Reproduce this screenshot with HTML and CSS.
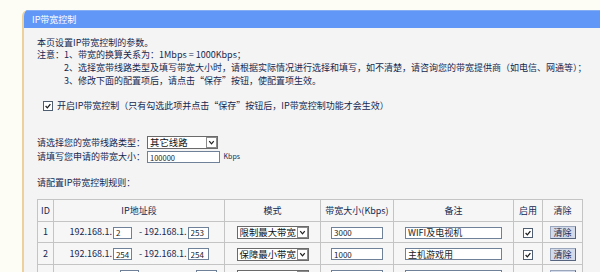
FILE: index.html
```html
<!DOCTYPE html>
<html lang="zh-CN">
<head>
  <meta charset="UTF-8">
  <title>IP带宽控制</title>
  <link rel="stylesheet" href="styles.css">
</head>
<body>
  <div class="panel">
    <div class="panel-title">IP带宽控制</div>
    <div class="panel-body">
      <div class="intro">
        <p>本页设置IP带宽控制的参数。</p>
        <div class="notes">
          <span class="notes-label">注意：</span>
          <div class="notes-list">
            <p>1、带宽的换算关系为：1Mbps = 1000Kbps；</p>
            <p>2、选择宽带线路类型及填写带宽大小时，请根据实际情况进行选择和填写，如不清楚，请咨询您的带宽提供商（如电信、网通等）；</p>
            <p>3、修改下面的配置项后，请点击“保存”按钮，使配置项生效。</p>
          </div>
        </div>
      </div>

      <label class="enable-row">
        <span class="check"><svg viewBox="0 0 10 10"><polyline points="2,5 4.2,7.3 8,2.6"/></svg></span>
        开启IP带宽控制（只有勾选此项并点击“保存”按钮后，IP带宽控制功能才会生效）
      </label>

      <div class="settings">
        <span>请选择您的宽带线路类型：</span>
        <span class="dropdown line-type">
          <span class="dropdown-text">其它线路</span>
          <span class="dropdown-btn"><svg viewBox="0 0 10 10"><polyline points="2.5,3.5 5,6.5 7.5,3.5"/></svg></span>
        </span>
        <span>请填写您申请的带宽大小：</span>
        <span class="bw-total"><input class="field total-field" type="text" value="100000"> Kbps</span>
      </div>

      <p class="rules-title">请配置IP带宽控制规则：</p>

      <table class="rules">
        <thead>
          <tr>
            <th class="col-id">ID</th>
            <th class="col-ip">IP地址段</th>
            <th class="col-mode">模式</th>
            <th class="col-bw">带宽大小(Kbps)</th>
            <th class="col-note">备注</th>
            <th class="col-on">启用</th>
            <th class="col-del">清除</th>
          </tr>
        </thead>
        <tbody>
          <tr>
            <td>1</td>
            <td>192.168.1.<input class="field ip-field" type="text" value="2"> - 192.168.1.<input class="field ip-field wide" type="text" value="253"></td>
            <td><span class="dropdown mode"><span class="dropdown-text">限制最大带宽</span><span class="dropdown-btn"><svg viewBox="0 0 10 10"><polyline points="2.5,3.5 5,6.5 7.5,3.5"/></svg></span></span></td>
            <td><input class="field bw-field" type="text" value="3000"></td>
            <td><input class="field note-field" type="text" value="WIFI及电视机"></td>
            <td><span class="check"><svg viewBox="0 0 10 10"><polyline points="2,5 4.2,7.3 8,2.6"/></svg></span></td>
            <td><button class="clear-btn">清除</button></td>
          </tr>
          <tr>
            <td>2</td>
            <td>192.168.1.<input class="field ip-field" type="text" value="254"> - 192.168.1.<input class="field ip-field wide" type="text" value="254"></td>
            <td><span class="dropdown mode"><span class="dropdown-text">保障最小带宽</span><span class="dropdown-btn"><svg viewBox="0 0 10 10"><polyline points="2.5,3.5 5,6.5 7.5,3.5"/></svg></span></span></td>
            <td><input class="field bw-field" type="text" value="1000"></td>
            <td><input class="field note-field" type="text" value="主机游戏用"></td>
            <td><span class="check"><svg viewBox="0 0 10 10"><polyline points="2,5 4.2,7.3 8,2.6"/></svg></span></td>
            <td><button class="clear-btn">清除</button></td>
          </tr>
          <tr class="row-cut">
            <td></td>
            <td class="ip-blank"><input class="field ip-field" type="text" value=""><input class="field ip-field wide" type="text" value=""></td>
            <td><span class="dropdown mode"><span class="dropdown-text"></span><span class="dropdown-btn"></span></span></td>
            <td><input class="field bw-field" type="text" value=""></td>
            <td><input class="field note-field" type="text" value=""></td>
            <td></td>
            <td><button class="clear-btn" aria-label="清除"></button></td>
          </tr>
        </tbody>
      </table>
    </div>
  </div>
</body>
</html>
```

FILE: styles.css
```css
:root {
  --text: #142850;
  --title-blue: #6198f8;
  --panel-bg: #f4f4f4;
  --panel-edge: #ecd19c;
  --grid: #c4c4c4;
  --field-border: #6f8198;
}

* {
  box-sizing: border-box;
}

body {
  margin: 0;
  background: #fdfdf6;
  color: var(--text);
  font-family: "Noto Sans CJK SC", sans-serif;
  font-size: 9px;
  overflow: hidden;
}

p {
  margin: 0;
}

.panel {
  margin: 10px 0 0 22px;
  border-left: 2px solid var(--panel-edge);
  border-top-left-radius: 6px;
  background: var(--panel-bg);
  min-height: 320px;
  overflow: hidden;
}

.panel-title {
  height: 18px;
  line-height: 17px;
  padding-left: 8px;
  border-top: 1px solid #86aef2;
  background: var(--title-blue);
  color: #fff;
}

.panel-body {
  padding: 8.6px 0 0 13px;
}

/* intro text */
.intro {
  line-height: 12.7px;
}

.notes {
  display: flex;
}

/* enable switch */
.enable-row {
  display: flex;
  align-items: center;
  gap: 4px;
  margin: 12.2px 0 0 6px;
  line-height: 12.7px;
}

.check {
  display: inline-block;
  width: 10px;
  height: 10px;
  border: 1px solid #4f5d70;
  background: #fff;
  vertical-align: middle;
}

.check svg {
  display: block;
  width: 8px;
  height: 8px;
  fill: none;
  stroke: #1d1d1d;
  stroke-width: 1.6;
}

/* line type + total bandwidth */
.settings {
  display: grid;
  grid-template-columns: 110px auto;
  grid-auto-rows: 14px;
  align-items: center;
  margin-top: 23.7px;
  justify-items: start;
}

.dropdown {
  display: inline-flex;
  align-items: center;
  height: 13px;
  border: 1px solid #6a6a6a;
  background: #fff;
  vertical-align: middle;
  text-align: left;
}

.dropdown-text {
  flex: 1;
  padding-left: 2px;
  line-height: 11px;
  color: #111;
  font-size: 9.4px;
}

.dropdown-btn {
  width: 11px;
  height: 11px;
  border: 1px solid #8a8a8a;
  background: #fff;
}

.dropdown-btn svg {
  display: block;
  width: 9px;
  height: 9px;
  fill: none;
  stroke: #222;
  stroke-width: 1.4;
}

.line-type {
  width: 71px;
}

.mode {
  width: 72px;
}

.field {
  height: 12px;
  padding: 0 2px;
  border: 1px solid var(--field-border);
  background: #fff;
  color: #222;
  font-family: "Noto Sans CJK SC", sans-serif;
  font-size: 8px;
  vertical-align: middle;
  outline: none;
}

.total-field {
  width: 73px;
  margin-right: 2px;
  font-size: 7.5px;
}

.bw-total {
  font-size: 7px;
}

.rules-title {
  margin-top: 12.6px;
  line-height: 12.7px;
}

/* rules table */
.rules {
  margin-top: 9.7px;
  width: 545px;
  border-collapse: collapse;
  table-layout: fixed;
  background: #f6f6f6;
}

.rules th,
.rules td {
  padding: 0;
  border: 1px solid var(--grid);
  text-align: center;
  font-weight: normal;
  white-space: nowrap;
}

.rules th {
  height: 22px;
}

.rules td {
  height: 22px;
}

.rules tbody tr:first-child td {
  height: 21px;
}

.col-id { width: 16px; }
.col-ip { width: 171px; }
.col-mode { width: 96px; }
.col-bw { width: 73px; }
.col-note { width: 120px; }
.col-on { width: 29px; }
.col-del { width: 40px; }

.ip-field {
  width: 19px;
  margin: 0 5px 0 1px;
}

.ip-field.wide {
  width: 21px;
  margin-right: 0;
}

/* last row is only partly in view: just the boxes */
.ip-blank {
  text-align: left;
}

.ip-blank .ip-field {
  margin: 0 0 0 59px;
}

.ip-blank .ip-field.wide {
  margin-left: 57px;
}

.bw-field {
  width: 52px;
}

.note-field {
  width: 97px;
  font-size: 9px;
}

.clear-btn {
  width: 26px;
  height: 13px;
  padding: 0;
  border: 1px solid #56647e;
  border-top-color: #9aa6bc;
  border-left-color: #9aa6bc;
  background: #d3daea;
  color: var(--text);
  font-family: "Noto Sans CJK SC", sans-serif;
  font-size: 9px;
  line-height: 11px;
  vertical-align: middle;
}
```
